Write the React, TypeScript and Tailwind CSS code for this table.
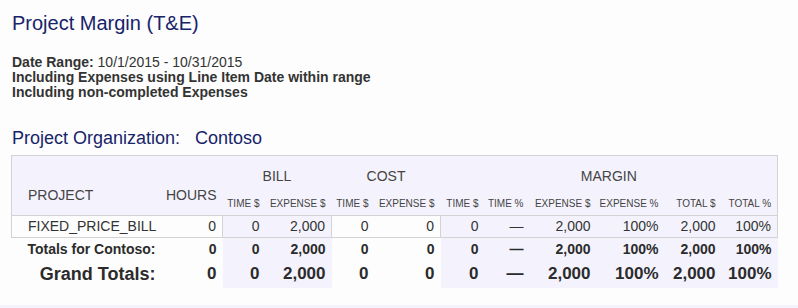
import React from "react";

const LAV = "bg-[#f4f3fd]";
const B = "border-[#d3d3d3]";

type Row = { label: string; vals: string[] };

const cols = [149, 62, 43, 66, 43, 66, 44, 45, 67, 68, 57, 56];
const lavIdx = new Set([2, 3, 6, 7, 8, 9, 10, 11]);

function ValueCells({ vals, kind }: { vals: string[]; kind: "data" | "tot" | "grand" }) {
  return (
    <>
      {vals.map((v, i) => {
        const idx = i + 1;
        const bg = lavIdx.has(idx) ? LAV : "";
        let cls = "text-right pr-[6px] whitespace-nowrap " + bg;
        if (kind === "data") {
          cls += ` border-t border-b ${B}`;
          if (idx === 1 || idx === 3 || idx === 5) cls += ` border-r ${B}`;
          if (idx === 11) cls += ` border-r ${B}`;
        }
        return (
          <td key={i} className={cls}>
            {v}
          </td>
        );
      })}
    </>
  );
}

export default function App() {
  const data: Row = {
    label: "FIXED_PRICE_BILL",
    vals: ["0", "0", "2,000", "0", "0", "0", "—", "2,000", "100%", "2,000", "100%"],
  };
  const sub = ["TIME $", "EXPENSE $", "TIME $", "EXPENSE $", "TIME $", "TIME %", "EXPENSE $", "EXPENSE %", "TOTAL $", "TOTAL %"];

  return (
    <div
      className="w-[798px] h-[308px] bg-[#fcfdfc] relative overflow-hidden text-[#333]"
      style={{ fontFamily: '"Liberation Sans", Arial, sans-serif' }}
    >
      <div className="pl-[12px] pt-[11px]">
        <h1 className="text-[20px] leading-[24px] text-[#18236a] font-normal">Project Margin (T&amp;E)</h1>
        <div className="mt-[20px] text-[14px] leading-[15px] text-[#333]">
          <div>
            <span className="font-bold">Date Range:</span> 10/1/2015 - 10/31/2015
          </div>
          <div className="font-bold">Including Expenses using Line Item Date within range</div>
          <div className="font-bold">Including non-completed Expenses</div>
        </div>
        <div className="mt-[27px] text-[18px] leading-[22px] text-[#18236a]">
          Project Organization:&nbsp;&nbsp;&nbsp;Contoso
        </div>
      </div>

      <div className="pl-[11px] mt-[6px]">
        <table className="table-fixed border-collapse w-[766px]">
          <colgroup>
            {cols.map((w, i) => (
              <col key={i} style={{ width: w }} />
            ))}
          </colgroup>
          <thead>
            <tr className={`h-[37px] ${LAV} text-[14px] text-[#444]`}>
              <th
                rowSpan={2}
                className={`text-left font-normal pl-4 pb-[9px] align-bottom border-l border-t ${B}`}
              >
                PROJECT
              </th>
              <th rowSpan={2} className={`text-right font-normal pr-[6px] pb-[9px] align-bottom border-t ${B}`}>
                HOURS
              </th>
              <th colSpan={2} className={`font-normal text-center align-middle pt-[4px] border-t ${B}`}>
                BILL
              </th>
              <th colSpan={2} className={`font-normal text-center align-middle pt-[4px] border-t ${B}`}>
                COST
              </th>
              <th colSpan={6} className={`font-normal text-center align-middle pt-[4px] border-t border-r ${B}`}>
                MARGIN
              </th>
            </tr>
            <tr className={`h-[23px] ${LAV} text-[10px] text-[#444]`}>
              {sub.map((s, i) => (
                <th
                  key={i}
                  className={`font-normal text-right pr-[6px] whitespace-nowrap align-middle ${
                    i === sub.length - 1 ? `border-r ${B}` : ""
                  }`}
                >
                  {s}
                </th>
              ))}
            </tr>
          </thead>
          <tbody>
            <tr className="h-[20px] text-[14px] text-[#333]">
              <td className={`pl-4 border-l border-t border-b ${B} whitespace-nowrap`}>{data.label}</td>
              <ValueCells vals={data.vals} kind="data" />
            </tr>
            <tr className="h-[23px] text-[14px] font-bold text-[#2b2b2b]">
              <td className="text-right pr-[5px] whitespace-nowrap">Totals for Contoso:</td>
              <ValueCells vals={["0", "0", "2,000", "0", "0", "0", "—", "2,000", "100%", "2,000", "100%"]} kind="tot" />
            </tr>
            <tr className="h-[27px] text-[17px] font-bold text-[#2b2b2b]">
              <td className="text-right pr-[5px] whitespace-nowrap text-[18px]">Grand Totals:</td>
              <ValueCells vals={["0", "0", "2,000", "0", "0", "0", "—", "2,000", "100%", "2,000", "100%"]} kind="grand" />
            </tr>
          </tbody>
        </table>
      </div>

      <div className={`absolute left-0 right-0 bottom-0 h-[3px] ${LAV}`} />
    </div>
  );
}
